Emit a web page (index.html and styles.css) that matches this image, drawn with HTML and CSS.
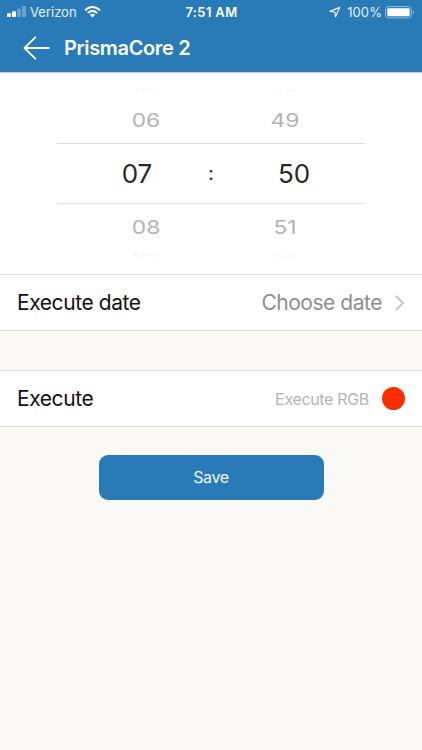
FILE: index.html
```html
<!DOCTYPE html>
<html lang="en">
<head>
<meta charset="utf-8">
<title>PrismaCore 2</title>
<link rel="stylesheet" href="styles.css">
</head>
<body>
<header class="header">
  <div class="status">
    <div class="status-left">
      <svg class="signal" width="20" height="12" viewBox="0 0 20 12" fill="#fff"><rect x="0" y="7.2" width="4" height="3.8" rx=".8"/><rect x="5" y="5.2" width="4" height="5.8" rx=".8"/><rect x="10" y="2.8" width="4" height="8.2" rx=".8" opacity=".3"/><rect x="15" y="0" width="4" height="11" rx=".8" opacity=".3"/></svg>
      <span class="carrier">Verizon</span>
      <svg class="wifi" width="17" height="12" viewBox="0 0 17 12" fill="none" stroke="#fff" stroke-width="2"><path d="M1 4.3Q8.500-2.300 16 4.300"/><path d="M3.700 7.100Q8.500 3 13.300 7.100"/><path d="M5.800 8.800Q8.500 6.600 11.200 8.800L8.500 11.500Z" fill="#fff" stroke="none"/></svg>
    </div>
    <div class="clock">7:51 AM</div>
    <div class="status-right">
      <svg width="12" height="12" viewBox="0 0 12 12" fill="none" stroke="#e6f2fb" stroke-width="1.200" stroke-linejoin="round"><path d="M1 5.400L10.600 1.400L6.500 10.800L5.900 6Z"/></svg>
      <span class="percent">100%</span>
      <svg class="battery" width="30" height="13" viewBox="0 0 30 13"><rect x=".6" y=".6" width="25.800" height="11.300" rx="3" fill="none" stroke="#91bddd"/><rect x="2.300" y="2.300" width="22.400" height="7.900" rx="1.300" fill="#fff"/><path d="M27.800 4.300Q30.400 6.200 27.800 8.100Z" fill="#91bddd"/></svg>
    </div>
  </div>
  <div class="nav">
    <svg width="28" height="24" viewBox="0 0 28 24" fill="none" stroke="#fff" stroke-width="1.800" stroke-linecap="round" stroke-linejoin="round"><path d="M12.300 1.300L1.500 12L12.300 22.700M1.500 12H26"/></svg>
    <h1 class="title">PrismaCore 2</h1>
  </div>
</header>
<main>
  <section class="picker">
    <div class="far"><span class="hour">05</span><span class="minute">48</span></div>
    <div class="near"><span class="hour">06</span><span class="minute">49</span></div>
    <div class="selected"><span class="sel-hour">07</span><span class="colon">:</span><span class="sel-minute">50</span></div>
    <div class="near near-bottom"><span class="hour">08</span><span class="minute">51</span></div>
    <div class="far"><span class="hour">09</span><span class="minute">52</span></div>
  </section>
  <section class="row">
    <span class="label">Execute date</span>
    <span class="value">Choose date</span>
    <svg class="chevron" width="10" height="16" viewBox="0 0 10 16" fill="none" stroke="#c4c4c6" stroke-width="1.800"><path d="M1 1L8 8L1 15"/></svg>
  </section>
  <section class="row row-execute">
    <span class="label">Execute</span>
    <span class="action">Execute RGB</span>
    <span class="dot"></span>
  </section>
  <button class="save">Save</button>
</main>
</body>
</html>
```
FILE: styles.css
```css
* { box-sizing: border-box; }
body { margin: 0; width: 422px; height: 750px; overflow: hidden; background: #fbf9f5; font-family: Inter, "Liberation Sans", sans-serif; color: #111; }
.header { height: 73px; background: #297bb7; border-bottom: 1px solid #b0d0ee; color: #fff; }
.status { height: 24px; display: grid; grid-template-columns: 1fr auto 1fr; align-items: center; padding: 0 7px; font-size: 13px; line-height: 24px; }
.status-left, .status-right { display: flex; align-items: center; }
.status-right { justify-content: flex-end; }
.carrier { margin-left: 3px; color: #e6f2fb; }
.wifi { margin-left: 7px; }
.clock { font-weight: 600; letter-spacing: .35px; padding-left: 1px; }
.percent { margin-left: 6px; color: #e6f2fb; letter-spacing: .1px; }
.battery { margin-left: 3px; }
.nav { height: 48px; display: flex; align-items: center; padding-left: 23px; }
.title { margin: 0 0 0 13px; font-size: 20px; line-height: 48px; font-weight: 600; letter-spacing: -.35px; }
.picker { height: 201px; background: #fff; padding: 16px 57px 0; }
.far { height: 4px; display: flex; align-items: center; font-size: 18px; line-height: 4px; color: #f5f5f5; }
.far span { transform: scale(1.1, .22); text-align: center; width: 40px; }
.near span { transform: scaleX(1.2); text-align: center; width: 40px; }
.hour { margin-left: 69px; }
.minute { margin-left: 99px; }
.near { height: 50px; display: flex; font-size: 19px; line-height: 56px; color: #b4b4b4; }
.selected { height: 61px; border-top: 1px solid #dedede; border-bottom: 1px solid #dedede; display: flex; align-items: center; font-size: 26px; color: #282828; }
.sel-hour { width: 40px; margin-left: 60px; text-align: center; }
.colon { width: 20px; margin-left: 44px; text-align: center; font-size: 19px; }
.sel-minute { width: 40px; margin-left: 53px; text-align: center; }
.near-bottom { line-height: 47px; }
.row { height: 57px; display: flex; align-items: center; padding: 0 17px; background: #fff; border-top: 1px solid #dedfe0; border-bottom: 1px solid #dedfe0; }
.label { font-size: 21px; letter-spacing: -.42px; color: #111; }
.value { margin-left: auto; font-size: 21px; letter-spacing: -.47px; color: #8e8e92; }
.chevron { margin-left: 13px; }
.row-execute { margin-top: 39px; }
.action { margin-left: auto; font-size: 16px; letter-spacing: -.33px; color: #b4b4b6; }
.dot { width: 23px; height: 23px; margin-left: 13px; border-radius: 50%; background: #ff2e00; }
.save { display: block; width: 225px; height: 45px; margin: 28px auto 0; padding: 0; border: 0; border-radius: 9px; background: #297bb7; color: #edf7ff; font: 16px/45px Inter, "Liberation Sans", sans-serif; letter-spacing: -.35px; }
```
